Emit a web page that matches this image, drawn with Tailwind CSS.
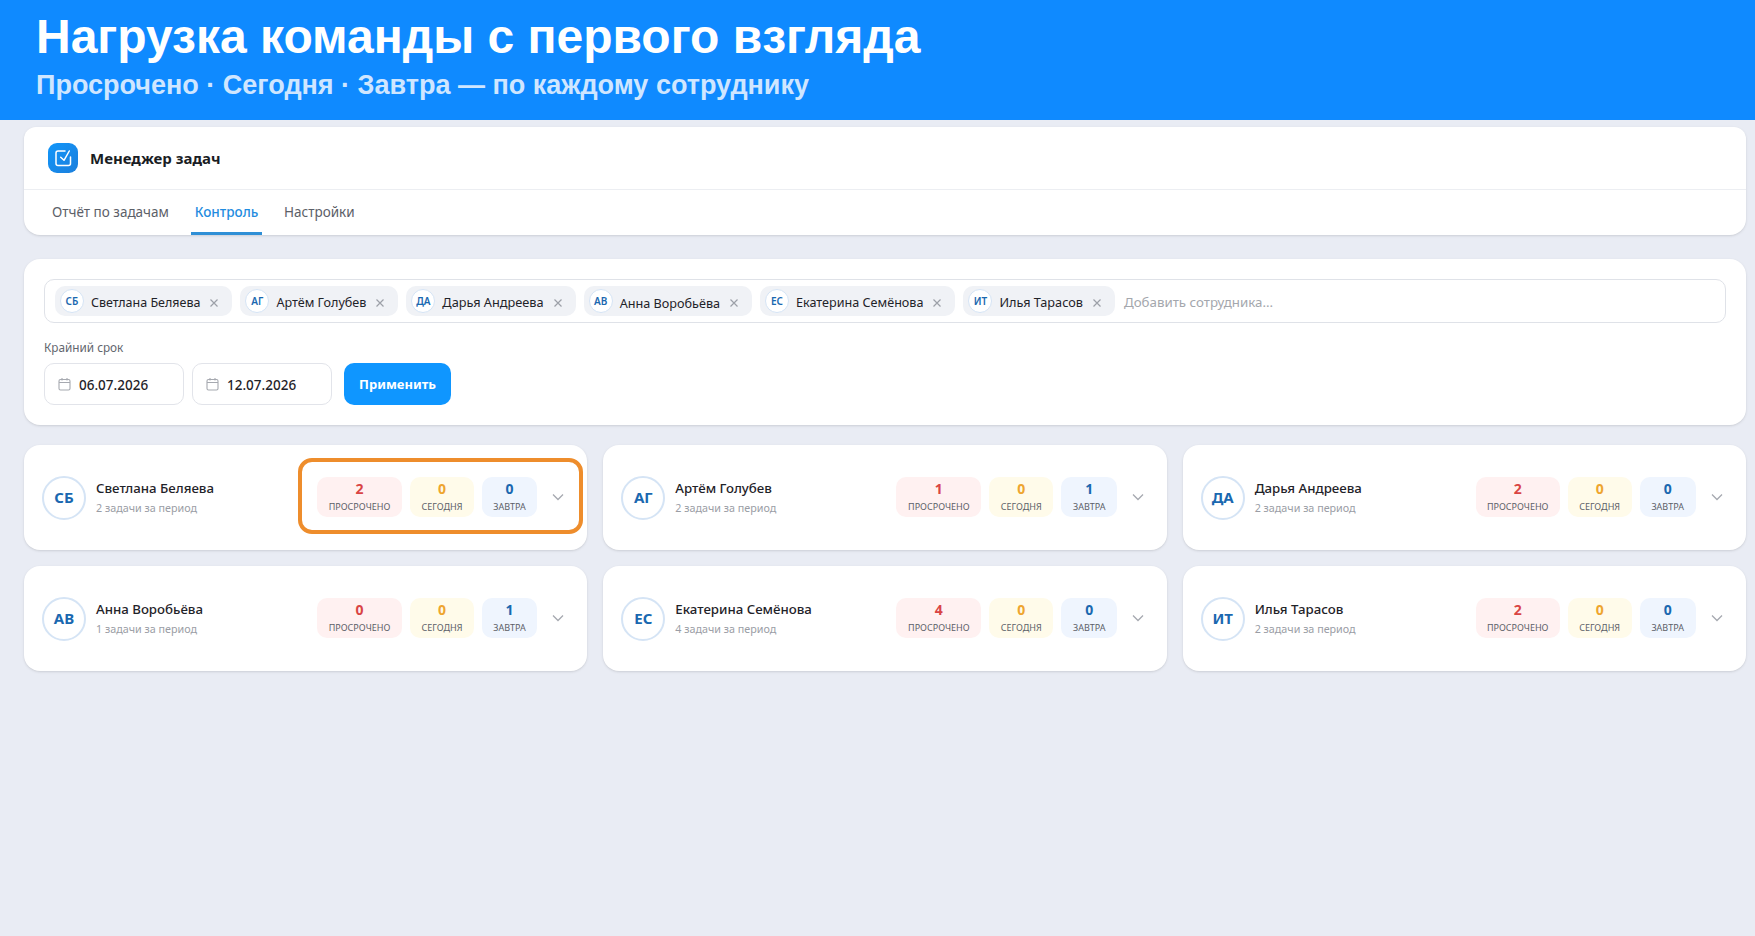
<!DOCTYPE html>
<html lang="ru"><head><meta charset="utf-8"><script src="https://cdn.jsdelivr.net/npm/@tailwindcss/browser@4"></script></head>
<body class="bg-[#e9ecf4] font-['Noto_Sans',sans-serif]">
<div class="w-[1755px] h-[936px] overflow-hidden flex flex-col">
<header class="h-[120px] bg-[#0f8aff] pl-9 pt-[10px] font-['Liberation_Sans',sans-serif] font-bold shrink-0">
<h1 class="text-[48px] leading-[54px] text-white">Нагрузка команды с первого взгляда</h1>
<p class="text-[27px] leading-[34px] mt-[4px] text-[#cfe6ff]">Просрочено · Сегодня · Завтра — по каждому сотруднику</p>
</header>
<main class="pl-6 pr-[9px] pt-[7px] flex flex-col">
<section class="bg-white rounded-b-2xl rounded-t-xl shadow-sm h-[108px]">
<div class="h-[63px] border-b border-[#eceef2] pl-6 flex items-center gap-3">
<div class="w-[30px] h-[30px] rounded-[9px] bg-gradient-to-br from-[#0f96fa] to-[#1b7fdc] flex items-center justify-center">
<svg width="20" height="20" viewBox="0 0 20 20" fill="none" stroke="white" stroke-width="1.500" stroke-linecap="round" stroke-linejoin="round"><path d="M17.500 9v6.500a2 2 0 0 1-2 2h-10.500a2 2 0 0 1-2-2v-10.500a2 2 0 0 1 2-2h7"/><path d="M7.700 9.300 11 12.300 16.300 3"/></svg>
</div>
<span class="text-[15px] font-bold text-[#1a1d24]">Менеджер задач</span>
</div>
<nav class="flex pl-[28px] h-[45px] text-[13.5px] text-[#5c6068] whitespace-nowrap">
<a class="h-full flex items-center w-[139px]">Отчёт по задачам</a>
<a class="h-full flex items-center justify-center w-[71px] font-medium text-[#1f8ce0] border-b-[3px] border-[#2f8fd6] pt-[3px]">Контроль</a>
<a class="h-full flex items-center ml-[22px]">Настройки</a>
</nav>
</section>

<section class="bg-white rounded-2xl shadow-sm mt-6 h-[166px] px-[20px] pt-[20px]">
<div class="h-[44px] rounded-[10px] border border-[#dfe2e8] flex items-center pl-[10px] gap-2">
<div class="h-[30px] rounded-[10px] bg-[#f0f2f6] flex items-center pl-[5px] pr-[13px] gap-[7px] text-[12.5px] text-[#1f2329]"><span class="w-[24px] h-[24px] rounded-full bg-white border border-[#d5e4f5] flex items-center justify-center text-[10px] font-semibold text-[#1a68b0]">СБ</span><span class="pt-[4px]">Светлана Беляева</span><svg class="ml-[2px] mt-[3px]" width="10" height="10" viewBox="0 0 10 10" stroke="#9ca0a8" stroke-width="1.200"><path d="M1.500 1.500l7 7M8.500 1.500l-7 7"/></svg></div>
<div class="h-[30px] rounded-[10px] bg-[#f0f2f6] flex items-center pl-[5px] pr-[13px] gap-[7px] text-[12.6px] text-[#1f2329]"><span class="w-[24px] h-[24px] rounded-full bg-white border border-[#d5e4f5] flex items-center justify-center text-[10px] font-semibold text-[#1a68b0]">АГ</span><span class="pt-[4px]">Артём Голубев</span><svg class="ml-[2px] mt-[3px]" width="10" height="10" viewBox="0 0 10 10" stroke="#9ca0a8" stroke-width="1.200"><path d="M1.500 1.500l7 7M8.500 1.500l-7 7"/></svg></div>
<div class="h-[30px] rounded-[10px] bg-[#f0f2f6] flex items-center pl-[5px] pr-[13px] gap-[7px] text-[12.75px] text-[#1f2329]"><span class="w-[24px] h-[24px] rounded-full bg-white border border-[#d5e4f5] flex items-center justify-center text-[10px] font-semibold text-[#1a68b0]">ДА</span><span class="pt-[4px]">Дарья Андреева</span><svg class="ml-[2px] mt-[3px]" width="10" height="10" viewBox="0 0 10 10" stroke="#9ca0a8" stroke-width="1.200"><path d="M1.500 1.500l7 7M8.500 1.500l-7 7"/></svg></div>
<div class="h-[30px] rounded-[10px] bg-[#f0f2f6] flex items-center pl-[5px] pr-[13px] gap-[7px] text-[12.65px] text-[#1f2329]"><span class="w-[24px] h-[24px] rounded-full bg-white border border-[#d5e4f5] flex items-center justify-center text-[10px] font-semibold text-[#1a68b0]">АВ</span><span class="pt-[4px]">Анна Воробьёва</span><svg class="ml-[2px] mt-[3px]" width="10" height="10" viewBox="0 0 10 10" stroke="#9ca0a8" stroke-width="1.200"><path d="M1.500 1.500l7 7M8.500 1.500l-7 7"/></svg></div>
<div class="h-[30px] rounded-[10px] bg-[#f0f2f6] flex items-center pl-[5px] pr-[13px] gap-[7px] text-[12.6px] text-[#1f2329]"><span class="w-[24px] h-[24px] rounded-full bg-white border border-[#d5e4f5] flex items-center justify-center text-[10px] font-semibold text-[#1a68b0]">ЕС</span><span class="pt-[4px]">Екатерина Семёнова</span><svg class="ml-[2px] mt-[3px]" width="10" height="10" viewBox="0 0 10 10" stroke="#9ca0a8" stroke-width="1.200"><path d="M1.500 1.500l7 7M8.500 1.500l-7 7"/></svg></div>
<div class="h-[30px] rounded-[10px] bg-[#f0f2f6] flex items-center pl-[5px] pr-[13px] gap-[7px] text-[12.7px] text-[#1f2329]"><span class="w-[24px] h-[24px] rounded-full bg-white border border-[#d5e4f5] flex items-center justify-center text-[10px] font-semibold text-[#1a68b0]">ИТ</span><span class="pt-[4px]">Илья Тарасов</span><svg class="ml-[2px] mt-[3px]" width="10" height="10" viewBox="0 0 10 10" stroke="#9ca0a8" stroke-width="1.200"><path d="M1.500 1.500l7 7M8.500 1.500l-7 7"/></svg></div>
<span class="text-[13.300px] text-[#a4a7ad] ml-[1px] pt-[3px]">Добавить сотрудника...</span>
</div>
<div class="text-[11.750px] text-[#62666e] mt-[15px] leading-[18px]">Крайний срок</div>
<div class="flex mt-[7px]">
<div class="w-[140px] h-[42px] rounded-[10px] border border-[#e2e4ea] flex items-center pl-[13px] gap-[8px] text-[13.500px] font-medium text-[#1f2329]"><svg width="13" height="14" viewBox="0 0 13 14" fill="none" stroke="#a6a9b0" stroke-width="1.100"><rect x="1" y="2.500" width="11" height="10.500" rx="1.500"/><path d="M1 5.500h11M4 1v2.500M9 1v2.500"/></svg><span class="pt-[2px]">06.07.2026</span></div>
<div class="w-[140px] h-[42px] rounded-[10px] border border-[#e2e4ea] flex items-center pl-[13px] gap-[8px] text-[13.500px] font-medium text-[#1f2329] ml-2"><svg width="13" height="14" viewBox="0 0 13 14" fill="none" stroke="#a6a9b0" stroke-width="1.100"><rect x="1" y="2.500" width="11" height="10.500" rx="1.500"/><path d="M1 5.500h11M4 1v2.500M9 1v2.500"/></svg><span class="pt-[2px]">12.07.2026</span></div>
<button class="w-[107px] h-[42px] rounded-[10px] bg-[#0f96ff] text-white text-[13px] font-bold ml-3 pt-[2px]">Применить</button>
</div>
</section>

<section class="grid grid-cols-3 gap-x-4 gap-y-4 mt-[20px]">
<article class="relative bg-white rounded-2xl shadow-sm h-[105px] flex items-center pl-[18px]">
<div class="w-[44px] h-[44px] rounded-full border-2 border-[#d5e4f5] flex items-center justify-center text-[15px] font-bold text-[#1a68b0] shrink-0">СБ</div>
<div class="ml-[10px] w-[221px] shrink-0 -mt-[1px]"><div class="text-[13.250px] leading-[20px] font-medium text-[#1f2329]">Светлана Беляева</div><div class="text-[10.750px] leading-[16px] mt-[2px] text-[#9a9da5]">2 задачи за период</div></div>
<div class="flex gap-2 -mt-[1px]">
<div class="w-[85px] h-[40px] rounded-[10px] bg-[#fff1f1] flex flex-col items-center justify-center"><b class="text-[14px] leading-[18px] text-[#d94545]">2</b><span class="text-[9px] leading-[14px] mt-[2px] text-[#5c6068]">ПРОСРОЧЕНО</span></div>
<div class="w-[64px] h-[40px] rounded-[10px] bg-[#fffbea] flex flex-col items-center justify-center"><b class="text-[14px] leading-[18px] text-[#eea52f]">0</b><span class="text-[9px] leading-[14px] mt-[2px] text-[#5c6068]">СЕГОДНЯ</span></div>
<div class="w-[55px] h-[40px] rounded-[10px] bg-[#eff5fe] flex flex-col items-center justify-center"><b class="text-[14px] leading-[18px] text-[#1a68b0]">0</b><span class="text-[9px] leading-[14px] mt-[2px] text-[#5c6068]">ЗАВТРА</span></div>
</div>
<svg class="ml-[15px] -mt-[1px]" width="12" height="8" viewBox="0 0 12 8" fill="none" stroke="#a6a9b0" stroke-width="1.300"><path d="M1 1.500l5 5 5-5"/></svg>
<div class="absolute left-[274px] top-[13px] w-[285px] h-[76px] rounded-[14px] border-[4px] border-[#ee8d2c]"></div>
</article>
<article class="bg-white rounded-2xl shadow-sm h-[105px] flex items-center pl-[18px]">
<div class="w-[44px] h-[44px] rounded-full border-2 border-[#d5e4f5] flex items-center justify-center text-[15px] font-bold text-[#1a68b0] shrink-0">АГ</div>
<div class="ml-[10px] w-[221px] shrink-0 -mt-[1px]"><div class="text-[13.250px] leading-[20px] font-medium text-[#1f2329]">Артём Голубев</div><div class="text-[10.750px] leading-[16px] mt-[2px] text-[#9a9da5]">2 задачи за период</div></div>
<div class="flex gap-2 -mt-[1px]">
<div class="w-[85px] h-[40px] rounded-[10px] bg-[#fff1f1] flex flex-col items-center justify-center"><b class="text-[14px] leading-[18px] text-[#d94545]">1</b><span class="text-[9px] leading-[14px] mt-[2px] text-[#5c6068]">ПРОСРОЧЕНО</span></div>
<div class="w-[64px] h-[40px] rounded-[10px] bg-[#fffbea] flex flex-col items-center justify-center"><b class="text-[14px] leading-[18px] text-[#eea52f]">0</b><span class="text-[9px] leading-[14px] mt-[2px] text-[#5c6068]">СЕГОДНЯ</span></div>
<div class="w-[56px] h-[40px] rounded-[10px] bg-[#eff5fe] flex flex-col items-center justify-center"><b class="text-[14px] leading-[18px] text-[#1a68b0]">1</b><span class="text-[9px] leading-[14px] mt-[2px] text-[#5c6068]">ЗАВТРА</span></div>
</div>
<svg class="ml-[15px] -mt-[1px]" width="12" height="8" viewBox="0 0 12 8" fill="none" stroke="#a6a9b0" stroke-width="1.300"><path d="M1 1.500l5 5 5-5"/></svg>
</article>
<article class="bg-white rounded-2xl shadow-sm h-[105px] flex items-center pl-[18px]">
<div class="w-[44px] h-[44px] rounded-full border-2 border-[#d5e4f5] flex items-center justify-center text-[15px] font-bold text-[#1a68b0] shrink-0">ДА</div>
<div class="ml-[10px] w-[221px] shrink-0 -mt-[1px]"><div class="text-[13.250px] leading-[20px] font-medium text-[#1f2329]">Дарья Андреева</div><div class="text-[10.750px] leading-[16px] mt-[2px] text-[#9a9da5]">2 задачи за период</div></div>
<div class="flex gap-2 -mt-[1px]">
<div class="w-[84px] h-[40px] rounded-[10px] bg-[#fff1f1] flex flex-col items-center justify-center"><b class="text-[14px] leading-[18px] text-[#d94545]">2</b><span class="text-[9px] leading-[14px] mt-[2px] text-[#5c6068]">ПРОСРОЧЕНО</span></div>
<div class="w-[64px] h-[40px] rounded-[10px] bg-[#fffbea] flex flex-col items-center justify-center"><b class="text-[14px] leading-[18px] text-[#eea52f]">0</b><span class="text-[9px] leading-[14px] mt-[2px] text-[#5c6068]">СЕГОДНЯ</span></div>
<div class="w-[56px] h-[40px] rounded-[10px] bg-[#eff5fe] flex flex-col items-center justify-center"><b class="text-[14px] leading-[18px] text-[#1a68b0]">0</b><span class="text-[9px] leading-[14px] mt-[2px] text-[#5c6068]">ЗАВТРА</span></div>
</div>
<svg class="ml-[15px] -mt-[1px]" width="12" height="8" viewBox="0 0 12 8" fill="none" stroke="#a6a9b0" stroke-width="1.300"><path d="M1 1.500l5 5 5-5"/></svg>
</article>
<article class="bg-white rounded-2xl shadow-sm h-[105px] flex items-center pl-[18px]">
<div class="w-[44px] h-[44px] rounded-full border-2 border-[#d5e4f5] flex items-center justify-center text-[15px] font-bold text-[#1a68b0] shrink-0">АВ</div>
<div class="ml-[10px] w-[221px] shrink-0 -mt-[1px]"><div class="text-[13.250px] leading-[20px] font-medium text-[#1f2329]">Анна Воробьёва</div><div class="text-[10.750px] leading-[16px] mt-[2px] text-[#9a9da5]">1 задачи за период</div></div>
<div class="flex gap-2 -mt-[1px]">
<div class="w-[85px] h-[40px] rounded-[10px] bg-[#fff1f1] flex flex-col items-center justify-center"><b class="text-[14px] leading-[18px] text-[#d94545]">0</b><span class="text-[9px] leading-[14px] mt-[2px] text-[#5c6068]">ПРОСРОЧЕНО</span></div>
<div class="w-[64px] h-[40px] rounded-[10px] bg-[#fffbea] flex flex-col items-center justify-center"><b class="text-[14px] leading-[18px] text-[#eea52f]">0</b><span class="text-[9px] leading-[14px] mt-[2px] text-[#5c6068]">СЕГОДНЯ</span></div>
<div class="w-[55px] h-[40px] rounded-[10px] bg-[#eff5fe] flex flex-col items-center justify-center"><b class="text-[14px] leading-[18px] text-[#1a68b0]">1</b><span class="text-[9px] leading-[14px] mt-[2px] text-[#5c6068]">ЗАВТРА</span></div>
</div>
<svg class="ml-[15px] -mt-[1px]" width="12" height="8" viewBox="0 0 12 8" fill="none" stroke="#a6a9b0" stroke-width="1.300"><path d="M1 1.500l5 5 5-5"/></svg>
</article>
<article class="bg-white rounded-2xl shadow-sm h-[105px] flex items-center pl-[18px]">
<div class="w-[44px] h-[44px] rounded-full border-2 border-[#d5e4f5] flex items-center justify-center text-[15px] font-bold text-[#1a68b0] shrink-0">ЕС</div>
<div class="ml-[10px] w-[221px] shrink-0 -mt-[1px]"><div class="text-[13.250px] leading-[20px] font-medium text-[#1f2329]">Екатерина Семёнова</div><div class="text-[10.750px] leading-[16px] mt-[2px] text-[#9a9da5]">4 задачи за период</div></div>
<div class="flex gap-2 -mt-[1px]">
<div class="w-[85px] h-[40px] rounded-[10px] bg-[#fff1f1] flex flex-col items-center justify-center"><b class="text-[14px] leading-[18px] text-[#d94545]">4</b><span class="text-[9px] leading-[14px] mt-[2px] text-[#5c6068]">ПРОСРОЧЕНО</span></div>
<div class="w-[64px] h-[40px] rounded-[10px] bg-[#fffbea] flex flex-col items-center justify-center"><b class="text-[14px] leading-[18px] text-[#eea52f]">0</b><span class="text-[9px] leading-[14px] mt-[2px] text-[#5c6068]">СЕГОДНЯ</span></div>
<div class="w-[56px] h-[40px] rounded-[10px] bg-[#eff5fe] flex flex-col items-center justify-center"><b class="text-[14px] leading-[18px] text-[#1a68b0]">0</b><span class="text-[9px] leading-[14px] mt-[2px] text-[#5c6068]">ЗАВТРА</span></div>
</div>
<svg class="ml-[15px] -mt-[1px]" width="12" height="8" viewBox="0 0 12 8" fill="none" stroke="#a6a9b0" stroke-width="1.300"><path d="M1 1.500l5 5 5-5"/></svg>
</article>
<article class="bg-white rounded-2xl shadow-sm h-[105px] flex items-center pl-[18px]">
<div class="w-[44px] h-[44px] rounded-full border-2 border-[#d5e4f5] flex items-center justify-center text-[15px] font-bold text-[#1a68b0] shrink-0">ИТ</div>
<div class="ml-[10px] w-[221px] shrink-0 -mt-[1px]"><div class="text-[13.250px] leading-[20px] font-medium text-[#1f2329]">Илья Тарасов</div><div class="text-[10.750px] leading-[16px] mt-[2px] text-[#9a9da5]">2 задачи за период</div></div>
<div class="flex gap-2 -mt-[1px]">
<div class="w-[84px] h-[40px] rounded-[10px] bg-[#fff1f1] flex flex-col items-center justify-center"><b class="text-[14px] leading-[18px] text-[#d94545]">2</b><span class="text-[9px] leading-[14px] mt-[2px] text-[#5c6068]">ПРОСРОЧЕНО</span></div>
<div class="w-[64px] h-[40px] rounded-[10px] bg-[#fffbea] flex flex-col items-center justify-center"><b class="text-[14px] leading-[18px] text-[#eea52f]">0</b><span class="text-[9px] leading-[14px] mt-[2px] text-[#5c6068]">СЕГОДНЯ</span></div>
<div class="w-[56px] h-[40px] rounded-[10px] bg-[#eff5fe] flex flex-col items-center justify-center"><b class="text-[14px] leading-[18px] text-[#1a68b0]">0</b><span class="text-[9px] leading-[14px] mt-[2px] text-[#5c6068]">ЗАВТРА</span></div>
</div>
<svg class="ml-[15px] -mt-[1px]" width="12" height="8" viewBox="0 0 12 8" fill="none" stroke="#a6a9b0" stroke-width="1.300"><path d="M1 1.500l5 5 5-5"/></svg>
</article>
</section>
</main>
</div>
</body></html>
